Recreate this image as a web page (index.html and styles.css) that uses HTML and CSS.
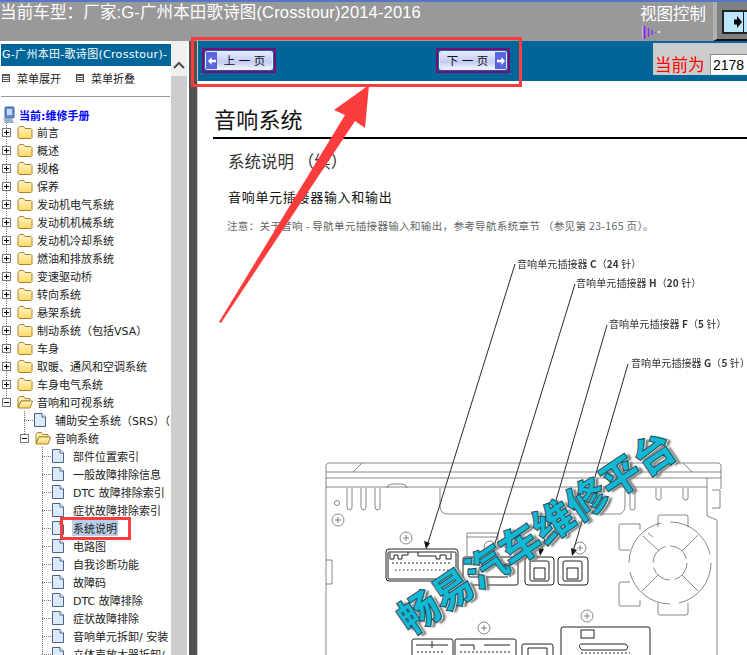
FILE: index.html
```html
<!DOCTYPE html>
<html lang="zh">
<head>
    <meta charset="UTF-8">
    <title>维修手册</title>
    <link rel="stylesheet" href="styles.css">
</head>
<body>
    <svg width="0" height="0" class="defs">
        <defs>
            <linearGradient id="folderFill" x1="0" y1="0" x2="0" y2="1">
                <stop offset="0" stop-color="#fff6cf"/>
                <stop offset="1" stop-color="#ffd75e"/>
            </linearGradient>
        </defs>
        <symbol id="folder" viewBox="0 0 16 14">
            <path d="M1 3.500 L2.500 1.500 H6.500 L8 3.500 H14 L15 4.500 V12.500 L14 13.500 H2 L1 12.500 Z" fill="url(#folderFill)" stroke="#a8842c"/>
        </symbol>
        <symbol id="folder-open" viewBox="0 0 16 14">
            <path d="M1 3.500 L2.500 1.500 H6.500 L8 3.500 H13 V6 H4 L1 12 Z" fill="#fff0b0" stroke="#a8842c"/>
            <path d="M1 13 L4 6 H15.500 L13 13 Z" fill="url(#folderFill)" stroke="#a8842c"/>
        </symbol>
        <symbol id="doc" viewBox="0 0 12 14">
            <path d="M.5 .5 H8 L11.500 4 V13.500 H.5 Z" fill="#dbe9fb" stroke="#48648c"/>
            <path d="M8 .5 V4 H11.500" fill="#fff" stroke="#48648c"/>
        </symbol>
    </svg>

    <header class="topbar">
        <div class="car-title">当前车型：厂家:G-广州本田歌诗图(Crosstour)2014-2016</div>
        <div class="view-ctrl">
            <div class="view-label">视图控制</div>
            <svg class="view-bars" width="20" height="13" viewBox="0 0 20 13">
                <path d="M1 0 V13" stroke="#e8d8ff" stroke-width="1"/>
                <path d="M2.500 0 V13" stroke="#8a20f0" stroke-width="2"/>
                <path d="M6.500 2 V11" stroke="#8a30e8" stroke-width="1.500"/>
                <path d="M10 4 V9" stroke="#7a40e0" stroke-width="1.500"/>
                <path d="M13 6 V8" stroke="#9060e0" stroke-width="1.500"/>
                <path d="M16 6 H18" stroke="#e8e8f0" stroke-width="2"/>
            </svg>
        </div>
        <div class="toggle">
            <div class="toggle-face">
                <svg width="8" height="12" viewBox="0 0 8 12"><path d="M0 3.500 H3 V0 L8 6 L3 12 V8.500 H0 Z" fill="#000"/></svg>
            </div>
        </div>
    </header>

    <div class="main">
        <aside class="side">
            <div class="side-title">G-广州本田-歌诗图(Crosstour)-</div>
            <div class="side-tools">
                <span class="tool"><i class="tool-box"></i>菜单展开</span>
                <span class="tool"><i class="tool-box"></i>菜单折叠</span>
            </div>
            <div class="tree">
                <div class="tree-root">
                    <svg width="14" height="18" viewBox="0 0 14 18">
                        <rect x="3" y="1" width="9" height="11" rx="1" fill="#5f8fd8" stroke="#3a5f9c"/>
                        <rect x="5" y="3" width="5" height="6" fill="#c4dcf6"/>
                        <path d="M1 12 L10 13 L12 17 L3 17 Z" fill="#9ab0c8"/>
                    </svg>
                    <b>当前:维修手册</b>
                </div>
                <ul class="level level-0">
                    <li class="row"><i class="box plus"></i><svg class="ic-folder"><use href="#folder"/></svg>前言</li>
                    <li class="row"><i class="box plus"></i><svg class="ic-folder"><use href="#folder"/></svg>概述</li>
                    <li class="row"><i class="box plus"></i><svg class="ic-folder"><use href="#folder"/></svg>规格</li>
                    <li class="row"><i class="box plus"></i><svg class="ic-folder"><use href="#folder"/></svg>保养</li>
                    <li class="row"><i class="box plus"></i><svg class="ic-folder"><use href="#folder"/></svg>发动机电气系统</li>
                    <li class="row"><i class="box plus"></i><svg class="ic-folder"><use href="#folder"/></svg>发动机机械系统</li>
                    <li class="row"><i class="box plus"></i><svg class="ic-folder"><use href="#folder"/></svg>发动机冷却系统</li>
                    <li class="row"><i class="box plus"></i><svg class="ic-folder"><use href="#folder"/></svg>燃油和排放系统</li>
                    <li class="row"><i class="box plus"></i><svg class="ic-folder"><use href="#folder"/></svg>变速驱动桥</li>
                    <li class="row"><i class="box plus"></i><svg class="ic-folder"><use href="#folder"/></svg>转向系统</li>
                    <li class="row"><i class="box plus"></i><svg class="ic-folder"><use href="#folder"/></svg>悬架系统</li>
                    <li class="row"><i class="box plus"></i><svg class="ic-folder"><use href="#folder"/></svg>制动系统（包括VSA）</li>
                    <li class="row"><i class="box plus"></i><svg class="ic-folder"><use href="#folder"/></svg>车身</li>
                    <li class="row"><i class="box plus"></i><svg class="ic-folder"><use href="#folder"/></svg>取暖、通风和空调系统</li>
                    <li class="row"><i class="box plus"></i><svg class="ic-folder"><use href="#folder"/></svg>车身电气系统</li>
                    <li class="row"><i class="box minus"></i><svg class="ic-folder"><use href="#folder-open"/></svg>音响和可视系统</li>
                    <li>
                        <ul class="level level-1">
                            <li class="row"><i class="dots"></i><svg class="ic-doc"><use href="#doc"/></svg>辅助安全系统（SRS）（</li>
                            <li class="row"><i class="box minus"></i><svg class="ic-folder"><use href="#folder-open"/></svg>音响系统</li>
                            <li>
                                <ul class="level level-2">
                                    <li class="row"><i class="dots"></i><svg class="ic-doc"><use href="#doc"/></svg>部件位置索引</li>
                                    <li class="row"><i class="dots"></i><svg class="ic-doc"><use href="#doc"/></svg>一般故障排除信息</li>
                                    <li class="row"><i class="dots"></i><svg class="ic-doc"><use href="#doc"/></svg>DTC 故障排除索引</li>
                                    <li class="row"><i class="dots"></i><svg class="ic-doc"><use href="#doc"/></svg>症状故障排除索引</li>
                                    <li class="row"><i class="dots"></i><svg class="ic-doc"><use href="#doc"/></svg><span class="selected">系统说明</span></li>
                                    <li class="row"><i class="dots"></i><svg class="ic-doc"><use href="#doc"/></svg>电路图</li>
                                    <li class="row"><i class="dots"></i><svg class="ic-doc"><use href="#doc"/></svg>自我诊断功能</li>
                                    <li class="row"><i class="dots"></i><svg class="ic-doc"><use href="#doc"/></svg>故障码</li>
                                    <li class="row"><i class="dots"></i><svg class="ic-doc"><use href="#doc"/></svg>DTC 故障排除</li>
                                    <li class="row"><i class="dots"></i><svg class="ic-doc"><use href="#doc"/></svg>症状故障排除</li>
                                    <li class="row"><i class="dots"></i><svg class="ic-doc"><use href="#doc"/></svg>音响单元拆卸/ 安装</li>
                                    <li class="row"><i class="dots"></i><svg class="ic-doc"><use href="#doc"/></svg>立体声放大器拆卸/</li>
                                </ul>
                            </li>
                        </ul>
                    </li>
                </ul>
            </div>
        </aside>
        <div class="scrollbar">
            <div class="scroll-up">
                <svg width="12" height="8" viewBox="0 0 12 8"><path d="M1 7 L6 2 L11 7" fill="none" stroke="#505050" stroke-width="2"/></svg>
            </div>
        </div>
        <div class="splitter"></div>

        <section class="content">
            <div class="pager">
                <a class="page-btn">
                    <span class="page-inner">
                        <span class="page-arrow">
                            <svg width="8" height="8" viewBox="0 0 9 9"><path d="M9 3 H4 V0 L0 4.500 L4 9 V6 H9 Z" fill="#fff"/></svg>
                        </span>
                        <span class="page-text">上 一 页</span>
                    </span>
                </a>
                <a class="page-btn next">
                    <span class="page-inner">
                        <span class="page-text">下 一 页</span>
                        <span class="page-arrow">
                            <svg width="8" height="8" viewBox="0 0 9 9"><path d="M0 3 H5 V0 L9 4.500 L5 9 V6 H0 Z" fill="#fff"/></svg>
                        </span>
                    </span>
                </a>
                <div class="page-now">
                    <span class="now-label">当前为</span>
                    <input class="now-input" value="2178">
                </div>
            </div>

            <article class="doc-page">
                <h1 class="doc-title">音响系统</h1>
                <h2 class="doc-sub">系统说明 （续）</h2>
                <h3 class="doc-head">音响单元插接器输入和输出</h3>
                <p class="doc-note">注意：关于音响 - 导航单元插接器输入和输出，参考导航系统章节 （参见第 23-165 页）。</p>

                <svg class="diagram" width="549" height="655" viewBox="198 0 549 655">
                    <g class="callouts">
                        <text x="517" y="268">音响单元插接器 <tspan font-weight="700">C</tspan>（<tspan font-weight="700">24</tspan> 针）</text>
                        <text x="576" y="287">音响单元插接器 <tspan font-weight="700">H</tspan>（<tspan font-weight="700">20</tspan> 针）</text>
                        <text x="609" y="328">音响单元插接器 <tspan font-weight="700">F</tspan>（<tspan font-weight="700">5</tspan> 针）</text>
                        <text x="631" y="367">音响单元插接器 <tspan font-weight="700">G</tspan>（<tspan font-weight="700">5</tspan> 针）</text>
                    </g>
                    <g class="leaders">
                        <path d="M515 264 L427 546"/>
                        <path d="M575 284 L492 553"/>
                        <path d="M607 325 L541 552"/>
                        <path d="M628 364 L573 552"/>
                    </g>
                    <g fill="#111">
                        <path d="M426 549 L424 541 L430 543 Z"/>
                        <path d="M491 556 L489 548 L495 550 Z"/>
                        <path d="M540 556 L538 548 L544 549 Z"/>
                        <path d="M572 556 L571 548 L577 550 Z"/>
                    </g>
                    <g class="chassis">
                        <path d="M326 655 V465 L328 463 H719 L721 465 V489 M717 520 V655"/>
                        <path d="M326 472 H721 M326 478 H721 M326 487 H707 M362 463 L353 472 M683 463 L692 472"/>
                        <path d="M347 488 V507 Q347 510 350 510 Q352 510 352 507 V488 M361 488 V507 Q361 510 364 510 Q366 510 366 507 V488 M375 488 V507 Q375 510 378 510 Q380 510 380 507 V488"/>
                        <path d="M387 488 Q388 484 392 484 H402 Q406 484 407 488"/>
                        <path d="M440 488 V506 Q440 514 448 514 H620 Q625 512 625 505 V488"/>
                        <path d="M630 488 V508 Q630 510 633 510 Q635 510 635 508 V488 M656 488 V498 Q656 500 659 500 Q661 500 661 498 V488 M683 488 V498 Q683 500 686 500 Q688 500 688 498 V488"/>
                        <path d="M707 478 V516 L717 520 M712 490 H720 V508 H712"/>
                        <circle cx="337" cy="503" r="2.500"/>
                        <circle cx="338" cy="520" r="6"/><path d="M335 520 H341 M338 517 V523"/>
                        <circle cx="406" cy="538" r="6"/><path d="M403 538 H409 M406 535 V541"/>
                        <circle cx="490" cy="547" r="6"/>
                        <circle cx="580" cy="548" r="6"/><path d="M577 548 H583 M580 545 V551"/>
                        <circle cx="587" cy="616" r="6"/><path d="M584 616 H590 M587 613 V619"/>
                        <circle cx="484" cy="628" r="6"/><path d="M481 628 H487 M484 625 V631"/>
                        <path d="M326 560 H332 V584 H326"/>
                        <path d="M467 556 V533 H498 M467 537 H498 M498 533 V545"/>
                        <!-- fan -->
                        <path d="M658 527 V517 Q658 515 660 515 H686 Q688 515 688 517 V527"/>
                        <path d="M658 603 V613 Q658 615 660 615 H686 Q688 615 688 613 V603"/>
                        <path d="M640 530 V524 H621 Q619 524 619 526 V548 Q619 550 621 550 H630"/>
                        <path d="M630 582 H621 Q619 582 619 584 V604 Q619 606 621 606 H640 V600"/>
                        <circle class="fan" cx="670" cy="563" r="41" stroke-dasharray="55.400 9"/>
                        <circle class="fan" cx="670" cy="563" r="17" stroke-dasharray="21.700 5"/>
                        <path d="M659 551 L643 536 M653 537 L648 533 M682 551 L698 535 M682 575 L698 591 M658 575 L642 591"/>
                    </g>
                    <g class="ports">
                        <rect x="386" y="549" width="72" height="32" rx="3"/>
                        <rect x="388" y="552" width="68" height="27" rx="1" stroke-width=".7"/>
                        <path d="M390 553 V559 H394 V555 H398 V559 H402 V555 H408 V552 M418 552 V556 H436 V559 H440 V555 H446 V559 H451 V553" stroke-width=".7"/>
                        <path d="M392 563 H452" stroke-dasharray="2 2" stroke-width="2"/>
                        <path d="M395 570 H450" stroke-dasharray="1.500 2.500" stroke-width="1.500"/>
                        <rect x="463" y="557" width="55" height="28" rx="2"/>
                        <path d="M471 564 H510 M482 564 V572 M510 564 V577 M469 568 V577 M469 577 H508" stroke-width=".7"/>
                        <rect x="525" y="557" width="29" height="28" rx="3"/>
                        <rect x="530" y="561" width="19" height="20" rx="2" stroke="#777" stroke-width=".7"/>
                        <rect x="534" y="568" width="11" height="11" stroke="#777" stroke-width=".7"/>
                        <rect x="558" y="557" width="30" height="28" rx="3"/>
                        <rect x="563" y="561" width="19" height="20" rx="2" stroke="#777" stroke-width=".7"/>
                        <rect x="567" y="568" width="11" height="11" stroke="#777" stroke-width=".7"/>
                        <path d="M412 655 V641 Q412 639 414 639 H451 Q453 639 453 641 V655"/>
                        <path d="M455 655 V641 Q455 639 457 639 H514 Q516 639 516 641 V655"/>
                        <path d="M417 652 H445 M460 652 H512" stroke-dasharray="2 2" stroke-width="1.500"/>
                        <path d="M416 645 H448 M432 641 V648 M460 645 H474 V650 M484 645 H510" stroke-width=".6"/>
                        <path d="M522 655 V646 Q522 644 524 644 H551 Q553 644 553 646 V655"/>
                        <path d="M528 655 V648 H547 V655" stroke-width=".6"/>
                        <path d="M561 655 V629 Q561 627 563 627 H648 Q650 627 650 629 V655"/>
                        <path d="M580 648 Q578 644 582 644 H625 Q630 646 626 650 H582 Z" stroke-width=".6"/>
                        <path d="M581 653 H630" stroke-dasharray="2 2" stroke-width="1.200"/>
                        <rect x="581" y="630" width="13" height="8" stroke-width=".6"/>
                    </g>
                </svg>
                <div class="watermark">畅易汽车维修平台</div>
            </article>
        </section>

        <!-- 红色标注 -->
        <div class="mark mark-pager"></div>
        <div class="mark mark-item"></div>
        <svg class="mark-arrow" width="200" height="260" viewBox="210 70 200 260">
            <path d="M219 322 L345 115 L334 110 L369 85 L365 128 L355 121 L221 323 Z" fill="#fb3c3c"/>
        </svg>
    </div>
</body>
</html>
```

FILE: styles.css
```css
* {
    box-sizing: border-box;
}
html, body {
    margin: 0;
    height: 655px;
    overflow: hidden;
}
body {
    background: #fff;
    font-family: "DejaVu Sans", "Noto Sans CJK SC", sans-serif;
    font-size: 11px;
    color: #222;
    display: flex;
    flex-direction: column;
}
.defs {
    position: absolute;
}

/* top bar */
.topbar {
    height: 41px;
    flex: none;
    display: flex;
    background: #999;
    border-top: 2px solid #5476c8;
    color: #fff;
    font-family: "Liberation Sans", "Noto Sans CJK SC", sans-serif;
}
.car-title {
    flex: 1;
    font-size: 16.500px;
    line-height: 20px;
    white-space: nowrap;
    letter-spacing: 0.15px;
}
.view-ctrl {
    width: 73px;
    padding-top: 2px;
}
.view-label {
    font-size: 16.500px;
    line-height: 20px;
}
.view-bars {
    display: block;
    margin: 2px 0 0 2px;
}
.toggle {
    width: 34px;
    background: #808080;
    border-left: 4px solid #b0b0b0;
    padding: 8px 0 0 5px;
    border-bottom: 2px solid #111;
}
.toggle-face {
    height: 24px;
    width: 25px;
    background: linear-gradient(90deg, #bce8ff 19px, #222 19px 20px, #bce8ff 20px);
    border: 2px solid #222;
    border-right-width: 0;
    display: flex;
    align-items: center;
    padding-left: 10px;
}

/* main */
.main {
    flex: 1;
    display: flex;
    min-height: 0;
    position: relative;
}
.side {
    width: 171px;
    flex: none;
    overflow: hidden;
    padding-top: 3px;
    padding-left: 1px;
}
.side-title {
    height: 22px;
    background: #006699;
    color: #fff;
    font-size: 11px;
    line-height: 22px;
    padding-left: 1px;
    letter-spacing: 0.3px;
    white-space: nowrap;
    overflow: hidden;
}
.side-tools {
    height: 31px;
    display: flex;
    gap: 15px;
    padding: 2px 0 0 1px;
    border-bottom: 1px solid #999;
    margin-right: 1px;
    font-size: 11px;
}
.tool {
    display: flex;
    align-items: center;
    height: 20px;
    gap: 7px;
}
.tool-box {
    width: 8px;
    height: 8px;
    border: 1px solid #555;
    background: repeating-linear-gradient(#555 0 1px, #fff 1px 2px);
}
.tree {
    margin-left: -1px;
    padding-top: 9px;
    font-size: 11px;
    white-space: nowrap;
}
.tree-root {
    height: 17px;
    display: flex;
    align-items: center;
    gap: 3px;
    padding-left: 2px;
    color: #0000ff;
}
.tree-root b {
    font-weight: 700;
}
.level {
    list-style: none;
    margin: 0;
    padding: 0;
    background-image: repeating-linear-gradient(#777 0 1px, transparent 1px 2px);
    background-repeat: no-repeat;
}
.level-0 {
    background-position: 6px 0;
    background-size: 1px 279px;
}
.level-1 {
    padding-left: 18px;
    background-position: 24px 0;
    background-size: 1px 27px;
}
.level-2 {
    padding-left: 18px;
    background-position: 24px 0;
    background-size: 1px 100%;
}
.row {
    height: 18px;
    display: flex;
    align-items: center;
    padding-left: 2px;
}
.box {
    width: 9px;
    height: 9px;
    flex: none;
    border: 1px solid #777;
    background:
        linear-gradient(#000, #000) center / 5px 1px no-repeat,
        #fff;
    margin-right: 6px;
}
.box.plus {
    background:
        linear-gradient(#000, #000) center / 5px 1px no-repeat,
        linear-gradient(#000, #000) center / 1px 5px no-repeat,
        #fff;
}
.dots {
    width: 14px;
    height: 1px;
    flex: none;
    background: repeating-linear-gradient(90deg, #777 0 1px, transparent 1px 2px);
    margin-left: 4px;
    margin-right: -4px;
}
.ic-folder {
    width: 16px;
    height: 14px;
    flex: none;
    margin-right: 4px;
}
.ic-doc {
    width: 12px;
    height: 14px;
    flex: none;
    margin-right: 9px;
}
.selected {
    background: #b8cfe8;
    padding: 0 1px;
    margin-left: -1px;
}

/* scroll + splitter */
.scrollbar {
    width: 16px;
    flex: none;
    background: #cdcdcd;
}
.scroll-up {
    height: 35px;
    background: #f0f0f0;
    padding: 18px 0 0 2px;
}
.splitter {
    flex: none;
    width: 11px;
    background: #505050;
    border-left: 2px solid #fff;
    border-right: 1px solid #c8c8c8;
}

/* content */
.content {
    flex: 1;
    min-width: 0;
    display: flex;
    flex-direction: column;
    overflow: hidden;
}
.pager {
    height: 40px;
    flex: none;
    background: #006699;
    display: flex;
    align-items: flex-start;
    padding: 7px 0 0 4px;
    position: relative;
}
.page-btn {
    width: 74px;
    height: 25px;
    border: 2px solid #70107a;
    display: flex;
    background: #1b5f96;
    padding: 1px;
}
.page-btn.next {
    margin-left: 160px;
}
.page-inner {
    flex: 1;
    display: flex;
    border: 1px solid #e8ecff;
    border-radius: 2px;
    overflow: hidden;
}
.page-arrow {
    width: 11px;
    background: #5a66e0;
    display: flex;
    align-items: center;
    justify-content: center;
    flex: none;
}
.page-text {
    flex: 1;
    background: linear-gradient(#e4e8ff, #c4ccf4 60%, #f0f2ff);
    color: #111;
    font-size: 11.500px;
    line-height: 16px;
    text-align: center;
    word-spacing: 1px;
    font-family: "Noto Sans CJK SC", sans-serif;
}
.page-now {
    position: absolute;
    right: 0;
    top: 2px;
    width: 94px;
    height: 32px;
    background: #ccc;
    display: flex;
    align-items: flex-end;
    padding: 0 0 0 2px;
    gap: 5px;
    white-space: nowrap;
}
.now-label {
    flex: none;
    width: 50px;
    color: #f00;
    font-family: "Noto Sans CJK SC", sans-serif;
    font-size: 16.500px;
    line-height: 22px;
}
.now-input {
    flex: none;
    width: 50px;
    height: 21px;
    border: 1px solid #888;
    border-bottom-color: #eee;
    font-family: "Liberation Sans", sans-serif;
    font-size: 14px;
    padding: 0 2px;
    color: #000;
}

/* scanned manual page */
.doc-page {
    flex: 1;
    position: relative;
    overflow: hidden;
    font-family: "Noto Sans CJK SC", sans-serif;
    color: #222;
}
.doc-title {
    margin: 0 -4px 0 15px;
    padding: 24px 0 0 1px;
    font-size: 22px;
    font-weight: 400;
    line-height: 26px;
    height: 58px;
    border-bottom: 2px solid #000;
    letter-spacing: 0.2px;
    color: #111;
}
.doc-sub {
    margin: 11px 0 0 30px;
    font-size: 16.500px;
    font-weight: 400;
    line-height: 22px;
    color: #333;
}
.doc-head {
    margin: 15px 0 0 30px;
    font-size: 13px;
    font-weight: 400;
    line-height: 20px;
    letter-spacing: 0.7px;
    color: #111;
}
.doc-note {
    margin: 11px 0 0 29px;
    font-size: 10.500px;
    line-height: 16px;
    color: #666;
    white-space: nowrap;
    letter-spacing: 0.35px;
}
.diagram {
    position: absolute;
    left: 0;
    top: -81px;
    filter: blur(0.3px);
}
.callouts text {
    font-family: "Noto Sans CJK SC", sans-serif;
    font-size: 10px;
    letter-spacing: 0.1px;
    fill: #333;
}
.leaders path {
    fill: none;
    stroke: #111;
    stroke-width: 0.900;
}
.chassis path, .chassis circle {
    fill: none;
    stroke: #555;
    stroke-width: 0.700;
}
.ports rect, .ports path {
    fill: #fff;
    stroke: #222;
    stroke-width: 1;
}
.ports path {
    fill: none;
}
.watermark {
    position: absolute;
    left: 203px;
    top: 519px;
    transform: rotate(-34deg);
    transform-origin: left center;
    font-family: "Noto Sans CJK SC", sans-serif;
    font-size: 40.500px;
    font-weight: 900;
    line-height: 44px;
    white-space: nowrap;
    color: #12b8d4;
    -webkit-text-stroke: 1px #1f4f60;
    text-shadow: 1px 1px 0 #fff, 3px 3px 2px #777;
}

/* red annotations */
.mark {
    position: absolute;
    border: 3px solid #fb3c3c;
    pointer-events: none;
}
.mark-pager {
    left: 191px;
    top: -4px;
    width: 331px;
    height: 50px;
}
.mark-item {
    left: 60px;
    top: 476px;
    width: 71px;
    height: 23px;
}
.mark-arrow {
    position: absolute;
    left: 210px;
    top: 29px;
    pointer-events: none;
}
```
